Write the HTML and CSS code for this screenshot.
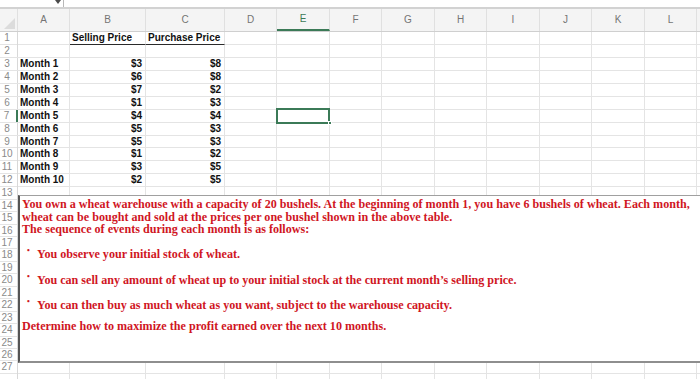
FILE: index.html
```html
<!DOCTYPE html>
<html lang="en">
<head>
  <meta charset="UTF-8" />
  <title>Wheat warehouse</title>
  <link rel="stylesheet" href="styles.css">
</head>
<body>

  <div class="toolbar">
    <span class="name-box"></span>
    <svg class="caret" width="6" height="4" viewBox="0 0 6 4"><path d="M0 0 L6 0 L3 4 Z" fill="#4A4A4A"/></svg>
    <span class="divider"></span>
  </div>

  <div class="sheet">
    <div class="row head">
      <div class="corner"></div>
      <div class="col">A</div><div class="col">B</div><div class="col">C</div><div class="col">D</div>
      <div class="col active">E</div><div class="col">F</div><div class="col">G</div><div class="col">H</div>
      <div class="col">I</div><div class="col">J</div><div class="col">K</div><div class="col">L</div>
    </div>

    <div class="row"><div class="rn">1</div><div class="c"></div><div class="c title">Selling Price</div><div class="c title">Purchase Price</div><i></i><i></i><i></i><i></i><i></i><i></i><i></i><i></i><i></i></div>
    <div class="row"><div class="rn">2</div><div class="c"></div><div class="c"></div><div class="c"></div><i></i><i></i><i></i><i></i><i></i><i></i><i></i><i></i><i></i></div>
    <div class="row"><div class="rn">3</div><div class="c">Month 1</div><div class="c num">$3</div><div class="c num">$8</div><i></i><i></i><i></i><i></i><i></i><i></i><i></i><i></i><i></i></div>
    <div class="row"><div class="rn">4</div><div class="c">Month 2</div><div class="c num">$6</div><div class="c num">$8</div><i></i><i></i><i></i><i></i><i></i><i></i><i></i><i></i><i></i></div>
    <div class="row"><div class="rn">5</div><div class="c">Month 3</div><div class="c num">$7</div><div class="c num">$2</div><i></i><i></i><i></i><i></i><i></i><i></i><i></i><i></i><i></i></div>
    <div class="row"><div class="rn">6</div><div class="c">Month 4</div><div class="c num">$1</div><div class="c num">$3</div><i></i><i></i><i></i><i></i><i></i><i></i><i></i><i></i><i></i></div>
    <div class="row"><div class="rn active">7</div><div class="c">Month 5</div><div class="c num">$4</div><div class="c num">$4</div><i></i><i class="selected"><b class="handle"></b></i><i></i><i></i><i></i><i></i><i></i><i></i><i></i></div>
    <div class="row"><div class="rn">8</div><div class="c">Month 6</div><div class="c num">$5</div><div class="c num">$3</div><i></i><i></i><i></i><i></i><i></i><i></i><i></i><i></i><i></i></div>
    <div class="row"><div class="rn">9</div><div class="c">Month 7</div><div class="c num">$5</div><div class="c num">$3</div><i></i><i></i><i></i><i></i><i></i><i></i><i></i><i></i><i></i></div>
    <div class="row"><div class="rn">10</div><div class="c">Month 8</div><div class="c num">$1</div><div class="c num">$2</div><i></i><i></i><i></i><i></i><i></i><i></i><i></i><i></i><i></i></div>
    <div class="row"><div class="rn">11</div><div class="c">Month 9</div><div class="c num">$3</div><div class="c num">$5</div><i></i><i></i><i></i><i></i><i></i><i></i><i></i><i></i><i></i></div>
    <div class="row"><div class="rn">12</div><div class="c">Month 10</div><div class="c num">$2</div><div class="c num">$5</div><i></i><i></i><i></i><i></i><i></i><i></i><i></i><i></i><i></i></div>
    <div class="row low"><div class="rn">13</div><div class="c"></div><div class="c"></div><div class="c"></div><i></i><i></i><i></i><i></i><i></i><i></i><i></i><i></i><i></i></div>
    <div class="row low"><div class="rn">14</div><div class="c"></div><div class="c"></div><div class="c"></div><i></i><i></i><i></i><i></i><i></i><i></i><i></i><i></i><i></i></div>
    <div class="row low"><div class="rn">15</div><div class="c"></div><div class="c"></div><div class="c"></div><i></i><i></i><i></i><i></i><i></i><i></i><i></i><i></i><i></i></div>
    <div class="row low"><div class="rn">16</div><div class="c"></div><div class="c"></div><div class="c"></div><i></i><i></i><i></i><i></i><i></i><i></i><i></i><i></i><i></i></div>
    <div class="row low"><div class="rn">17</div><div class="c"></div><div class="c"></div><div class="c"></div><i></i><i></i><i></i><i></i><i></i><i></i><i></i><i></i><i></i></div>
    <div class="row low"><div class="rn">18</div><div class="c"></div><div class="c"></div><div class="c"></div><i></i><i></i><i></i><i></i><i></i><i></i><i></i><i></i><i></i></div>
    <div class="row low"><div class="rn">19</div><div class="c"></div><div class="c"></div><div class="c"></div><i></i><i></i><i></i><i></i><i></i><i></i><i></i><i></i><i></i></div>
    <div class="row low"><div class="rn">20</div><div class="c"></div><div class="c"></div><div class="c"></div><i></i><i></i><i></i><i></i><i></i><i></i><i></i><i></i><i></i></div>
    <div class="row low"><div class="rn">21</div><div class="c"></div><div class="c"></div><div class="c"></div><i></i><i></i><i></i><i></i><i></i><i></i><i></i><i></i><i></i></div>
    <div class="row low"><div class="rn">22</div><div class="c"></div><div class="c"></div><div class="c"></div><i></i><i></i><i></i><i></i><i></i><i></i><i></i><i></i><i></i></div>
    <div class="row low"><div class="rn">23</div><div class="c"></div><div class="c"></div><div class="c"></div><i></i><i></i><i></i><i></i><i></i><i></i><i></i><i></i><i></i></div>
    <div class="row low"><div class="rn">24</div><div class="c"></div><div class="c"></div><div class="c"></div><i></i><i></i><i></i><i></i><i></i><i></i><i></i><i></i><i></i></div>
    <div class="row low"><div class="rn">25</div><div class="c"></div><div class="c"></div><div class="c"></div><i></i><i></i><i></i><i></i><i></i><i></i><i></i><i></i><i></i></div>
    <div class="row low"><div class="rn">26</div><div class="c"></div><div class="c"></div><div class="c"></div><i></i><i></i><i></i><i></i><i></i><i></i><i></i><i></i><i></i></div>
    <div class="row low"><div class="rn">27</div><div class="c"></div><div class="c"></div><div class="c"></div><i></i><i></i><i></i><i></i><i></i><i></i><i></i><i></i><i></i></div>
    <div class="row low"><div class="rn"></div><div class="c"></div><div class="c"></div><div class="c"></div><i></i><i></i><i></i><i></i><i></i><i></i><i></i><i></i><i></i></div>

    <!-- text box floating over the sheet -->
    <div class="note">
      <p>You own a wheat warehouse with a capacity of 20 bushels. At the beginning of month 1, you have 6 bushels of wheat. Each month,</p>
      <p>wheat can be bought and sold at the prices per one bushel shown in the above table.</p>
      <p>The sequence of events during each month is as follows:</p>
      <p class="bullet first"><span class="dot">&bull;</span>You observe your initial stock of wheat.</p>
      <p class="bullet"><span class="dot">&bull;</span>You can sell any amount of wheat up to your initial stock at the current month’s selling price.</p>
      <p class="bullet"><span class="dot">&bull;</span>You can then buy as much wheat as you want, subject to the warehouse capacity.</p>
      <p class="last">Determine how to maximize the profit earned over the next 10 months.</p>
    </div>
  </div>

</body>
</html>
```

FILE: styles.css
```css
* {
  margin: 0;
  padding: 0;
  box-sizing: border-box;
}

body {
  background-color: #FFFFFF;
  font-family: "Liberation Sans", Arial, sans-serif;
  height: 100vh;
  overflow: hidden;
}

/* formula bar, mostly scrolled out of view */
.toolbar {
  height: 9px;
  border-bottom: 2px solid #D2D2D2;
  display: flex;
  align-items: flex-start;
  overflow: hidden;
}

.name-box {
  width: 55px;
}

.divider {
  width: 1px;
  height: 7px;
  margin-left: 2px;
  background-color: #B8B8B8;
}

.sheet {
  position: relative;
}

.row {
  display: grid;
  grid-template-columns: 18px 52px 76px 79px 52px 53px 52px 53px 52px 53px 52px 53px 52px;
  height: 12.95px;
  border-bottom: 1px solid #E4E4E4;
}

.row.low {
  height: 12.45px;
}

.row > * {
  border-right: 1px solid #E4E4E4;
}

/* column letters */
.head {
  height: 23px;
  background-color: #F4F4F4;
  border-bottom: 1px solid #CFCFCF;
}

.head > * {
  border-right-color: #E0E0E0;
}

.corner {
  position: relative;
}

.corner::after {
  content: "";
  position: absolute;
  right: 2px;
  bottom: 2px;
  border-left: 11px solid transparent;
  border-bottom: 11px solid #DCDCDC;
}

.col {
  text-align: center;
  font-size: 10px;
  line-height: 22px;
  color: #747474;
}

.col.active {
  color: #3B7A57;
  border-bottom: 2px solid #3B7A57;
  line-height: 20px;
}

/* row numbers */
.rn {
  text-align: center;
  padding-right: 3px;
  font-size: 10px;
  line-height: 12.5px;
  color: #8A8A8A;
  border-right-color: #D8D8D8;
}

.rn.active {
  border-right: 2px solid #3B7A57;
}

.c {
  padding: 0 3px 0 2px;
  font-size: 10px;
  font-weight: bold;
  line-height: 12.5px;
  color: #111111;
  white-space: nowrap;
  overflow: hidden;
}

.num {
  text-align: right;
}

.title {
  padding-left: 2px;
  border-bottom: 1px solid #2A2A2A;
}

.selected {
  position: relative;
}

.selected::before {
  content: "";
  position: absolute;
  left: -1px;
  top: -1.5px;
  right: -1px;
  bottom: -1.5px;
  border: 2px solid #3B7A57;
}

.handle {
  position: absolute;
  right: -3px;
  bottom: -3px;
  width: 4px;
  height: 4px;
  background-color: #3B7A57;
  border: 1px solid #FFFFFF;
}

/* text box */
.note {
  position: absolute;
  top: 186px;
  left: 18px;
  right: -20px;
  height: 168px;
  background-color: #FFFFFF;
  border-top: 1px solid #A0A0A0;
  border-left: 2px solid #555555;
  border-bottom: 2px solid #8E8E8E;
  padding: 2px 0 0 2px;
  font-family: "Liberation Serif", "Times New Roman", serif;
  font-weight: bold;
  font-size: 12.1px;
  line-height: 12.5px;
  color: #D0161F;
  white-space: nowrap;
}

.bullet {
  position: relative;
  margin-top: 13px;
  padding-left: 15px;
}

.bullet.first {
  margin-top: 12.5px;
}

.dot {
  position: absolute;
  left: 5px;
  top: -3px;
  font-size: 8px;
}

.last {
  margin-top: 8.5px;
}
```
